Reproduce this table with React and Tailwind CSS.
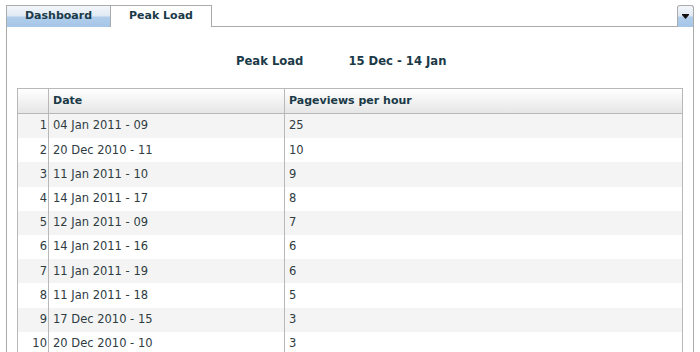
import React from 'react';

const rows = [
  ['04 Jan 2011 - 09', 25],
  ['20 Dec 2010 - 11', 10],
  ['11 Jan 2011 - 10', 9],
  ['14 Jan 2011 - 17', 8],
  ['12 Jan 2011 - 09', 7],
  ['14 Jan 2011 - 16', 6],
  ['11 Jan 2011 - 19', 6],
  ['11 Jan 2011 - 18', 5],
  ['17 Dec 2010 - 15', 3],
  ['20 Dec 2010 - 10', 3],
];

const tabBg =
  'bg-[linear-gradient(to_bottom,#f4f7fb_0%,#dfe8f3_48%,#b1cdeb_52%,#a6c6e8_100%)]';

export default function App() {
  return (
    <div className="w-[700px] h-[352px] overflow-hidden bg-white font-['DejaVu_Sans',Verdana,sans-serif] text-[11px]">
      {/* tab strip */}
      <div className="flex h-[27px] pt-[5px] px-[6px]">
        <div className={`w-[104px] border-t border-l border-[#ababab] ${tabBg} flex items-center justify-center font-bold text-[#1b3a48]`}>
          Dashboard
        </div>
        <div className="w-[102px] border-t border-x border-[#ababab] bg-white flex items-center justify-center font-bold text-[#1b3a48]">
          Peak Load
        </div>
        <div className="flex-1 border-b border-[#ababab]" />
        <div className={`w-[17px] border border-b-0 border-[#ababab] rounded-t-[3px] ${tabBg} flex items-center justify-center`}>
          <svg width="7" height="5" viewBox="0 0 7 5">
            <rect x="0" y="0" width="7" height="1" fill="#111" />
            <path d="M0 1 H7 L3.5 5 Z" fill="#111" />
          </svg>
        </div>
      </div>

      {/* panel */}
      <div className="mx-[6px] h-[325px] border-x border-[#ababab] px-[10px]">
        <div className="flex h-[61px] items-start pt-[27px] pl-[219px] gap-[45px] text-[11.6px] font-bold text-[#1b3a48] leading-[15px]">
          <span>Peak Load</span>
          <span>15 Dec - 14 Jan</span>
        </div>

        <div className="border border-[#b8b8b8]">
          <div className="grid grid-cols-[31px_236px_1fr] h-[25px] border-b border-[#b8b8b8] bg-[linear-gradient(to_bottom,#ffffff,#e6e6e6)] font-bold text-[#1b3a48]">
            <div className="border-r border-[#b8b8b8]" />
            <div className="border-r border-[#b8b8b8] pl-[4px] flex items-center">Date</div>
            <div className="pl-[4px] flex items-center">Pageviews per hour</div>
          </div>
          {rows.map((r, i) => (
            <div
              key={i}
              className={`grid grid-cols-[31px_236px_1fr] h-[24.2px] text-[11.5px] text-[#2f3c42] ${i % 2 === 0 ? 'bg-[#f4f4f4]' : 'bg-white'}`}
            >
              <div className="border-r border-[#b8b8b8] pr-[1px] flex items-center justify-end">{i + 1}</div>
              <div className="border-r border-[#b8b8b8] pl-[4px] flex items-center">{r[0]}</div>
              <div className="pl-[4px] flex items-center">{r[1]}</div>
            </div>
          ))}
        </div>
      </div>
    </div>
  );
}
